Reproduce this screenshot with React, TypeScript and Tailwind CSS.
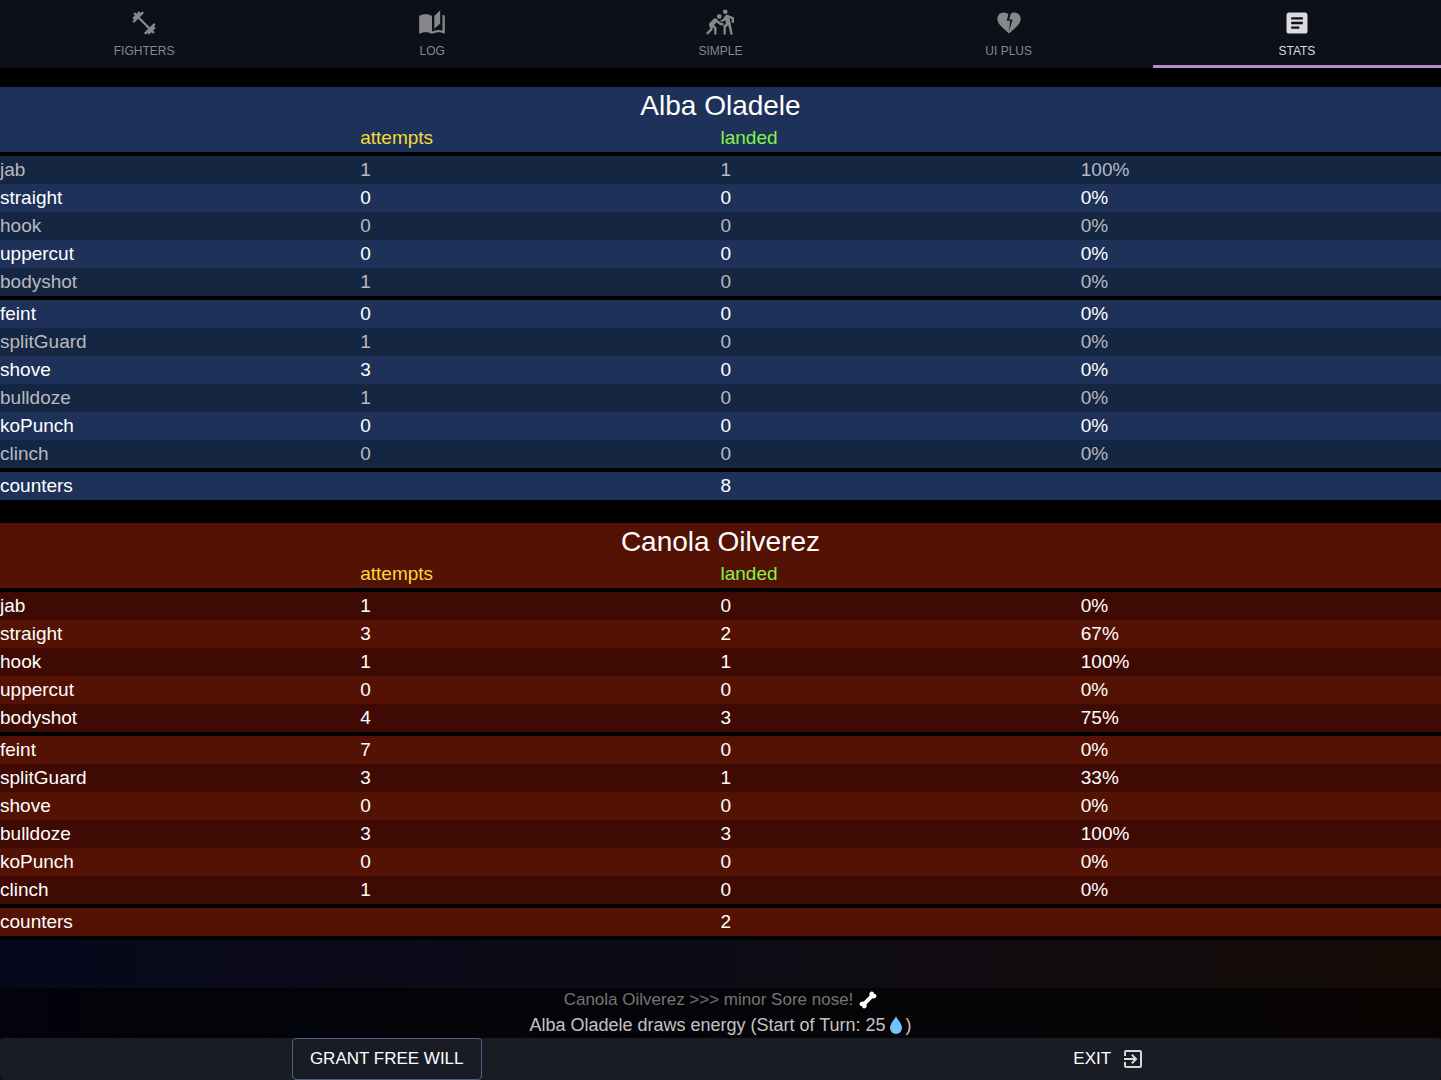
import type { IconType } from 'react-icons';
import {
  MdArticle,
  MdAutoStories,
  MdExitToApp,
  MdFitnessCenter,
  MdHeartBroken,
  MdSportsKabaddi,
} from 'react-icons/md';

type Stat = [move: string, attempts: number, landed: number, rate: string];

interface Fighter {
  name: string;
  punches: Stat[];
  specials: Stat[];
  counters: number;
}

interface Theme {
  base: string;
  stripe: string;
}

const TABS: { label: string; icon: IconType }[] = [
  { label: 'FIGHTERS', icon: MdFitnessCenter },
  { label: 'LOG', icon: MdAutoStories },
  { label: 'SIMPLE', icon: MdSportsKabaddi },
  { label: 'UI PLUS', icon: MdHeartBroken },
  { label: 'STATS', icon: MdArticle },
];

const ALBA: Fighter = {
  name: 'Alba Oladele',
  punches: [
    ['jab', 1, 1, '100%'],
    ['straight', 0, 0, '0%'],
    ['hook', 0, 0, '0%'],
    ['uppercut', 0, 0, '0%'],
    ['bodyshot', 1, 0, '0%'],
  ],
  specials: [
    ['feint', 0, 0, '0%'],
    ['splitGuard', 1, 0, '0%'],
    ['shove', 3, 0, '0%'],
    ['bulldoze', 1, 0, '0%'],
    ['koPunch', 0, 0, '0%'],
    ['clinch', 0, 0, '0%'],
  ],
  counters: 8,
};

const CANOLA: Fighter = {
  name: 'Canola Oilverez',
  punches: [
    ['jab', 1, 0, '0%'],
    ['straight', 3, 2, '67%'],
    ['hook', 1, 1, '100%'],
    ['uppercut', 0, 0, '0%'],
    ['bodyshot', 4, 3, '75%'],
  ],
  specials: [
    ['feint', 7, 0, '0%'],
    ['splitGuard', 3, 1, '33%'],
    ['shove', 0, 0, '0%'],
    ['bulldoze', 3, 3, '100%'],
    ['koPunch', 0, 0, '0%'],
    ['clinch', 1, 0, '0%'],
  ],
  counters: 2,
};

const BLUE: Theme = { base: 'bg-[#1e3259]', stripe: 'bg-[#152643] text-[#b8babe]' };
const RED: Theme = { base: 'bg-[#541204]', stripe: 'bg-[#400a04]' };

function StatRow({ stat, className }: { stat: Stat; className: string }) {
  const [move, attempts, landed, rate] = stat;
  return (
    <tr className={className}>
      <th scope="row" className="text-left font-normal">{move}</th>
      <td>{attempts}</td>
      <td>{landed}</td>
      <td>{rate}</td>
    </tr>
  );
}

function StatsTable({ fighter, theme }: { fighter: Fighter; theme: Theme }) {
  return (
    <table className="w-full table-fixed border-separate border-spacing-0 bg-black text-[19px] leading-7 text-white">
      <caption className={`text-[28px] leading-[37px] ${theme.base}`}>{fighter.name}</caption>
      <thead>
        <tr className={theme.base}>
          <td />
          <th scope="col" className="text-left font-normal text-[#f5d93a]">attempts</th>
          <th scope="col" className="text-left font-normal text-[#84f548]">landed</th>
          <td />
        </tr>
      </thead>
      <tbody>
        <tr className="h-1"><td colSpan={4} /></tr>
        {fighter.punches.map((stat, i) => (
          <StatRow key={stat[0]} stat={stat} className={i % 2 === 0 ? theme.stripe : theme.base} />
        ))}
      </tbody>
      <tbody>
        <tr className="h-1"><td colSpan={4} /></tr>
        {fighter.specials.map((stat, i) => (
          <StatRow key={stat[0]} stat={stat} className={i % 2 === 0 ? theme.base : theme.stripe} />
        ))}
      </tbody>
      <tbody>
        <tr className="h-1"><td colSpan={4} /></tr>
        <tr className={theme.base}>
          <th scope="row" className="text-left font-normal">counters</th>
          <td />
          <td>{fighter.counters}</td>
          <td />
        </tr>
      </tbody>
    </table>
  );
}

function Bone() {
  return (
    <svg viewBox="0 0 18 18" className="h-[18px] w-[18px]" fill="#fff" aria-hidden="true">
      <path d="M10.500 4.800C9.900 2.400 11 .6 12.800.6c1.300 0 2.100.8 2.200 2.200 1.500 0 2.500 1 2.500 2.300 0 1.900-2 2.800-4 2.200l-5.900 5.900c.6 2.300-.4 4.200-2.300 4.200-1.300 0-2.100-.8-2.200-2.200C1.600 15.200.6 14.200.6 12.900c0-1.900 1.900-2.900 4.100-2.300z" />
    </svg>
  );
}

function Droplet() {
  return (
    <svg viewBox="0 0 12 18" className="h-[18px] w-3" fill="#73c2fb" aria-hidden="true">
      <path d="M6 0c.6 2.800 6 7.300 6 12a6 6 0 0 1-12 0C0 7.300 5.400 2.800 6 0z" />
    </svg>
  );
}

export default function App() {
  return (
    <div
      className="flex min-h-screen flex-col bg-linear-to-r from-[#07081c] via-[#0d0b15] to-[#150b06]"
      style={{ fontFamily: '"Liberation Sans", Arial, sans-serif' }}
    >
      <nav className="grid grid-cols-5 bg-[#0d1018]" role="tablist">
        {TABS.map(({ label, icon: Icon }) => {
          const active = label === 'STATS';
          return (
            <button
              key={label}
              role="tab"
              aria-selected={active}
              className={`flex h-[68px] flex-col items-center gap-[6px] border-b-3 pt-[9px] text-[12px] leading-4 ${
                active ? 'border-[#b78bc9] text-[#dcdcde]' : 'border-transparent text-[#86878b]'
              }`}
            >
              <Icon size={28} />
              {label}
            </button>
          );
        })}
      </nav>

      <main className="flex flex-col gap-[23px] border-b-4 border-black bg-black pt-[19px]">
        <StatsTable fighter={ALBA} theme={BLUE} />
        <StatsTable fighter={CANOLA} theme={RED} />
      </main>

      <footer className="mt-auto">
        <div className="flex flex-col items-center bg-black/60 text-[#c4c4c4]">
          <p className="flex items-center gap-1.5 text-[17px] leading-6 text-[#757575]">
            Canola Oilverez &gt;&gt;&gt; minor Sore nose! <Bone />
          </p>
          <p className="flex items-center gap-1 text-[18px] leading-[26px]">
            Alba Oladele draws energy (Start of Turn: 25 <Droplet /> )
          </p>
        </div>
        <div className="flex justify-around rounded bg-[#1a1c25] text-[17px] text-white">
          <button className="h-[42px] rounded border border-[#4f6285] px-[17px]">GRANT FREE WILL</button>
          <button className="flex h-[42px] items-center gap-[10px] pr-1 pl-2">
            EXIT <MdExitToApp size={24} className="text-[#d8d8da]" />
          </button>
        </div>
      </footer>
    </div>
  );
}
